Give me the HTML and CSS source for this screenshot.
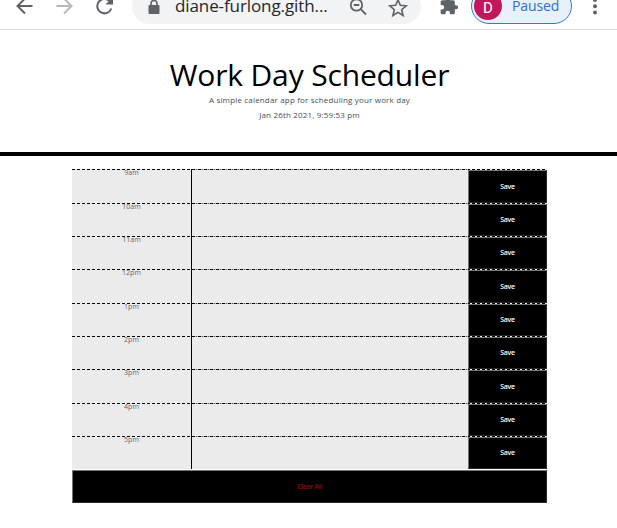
FILE: index.html
```
<!DOCTYPE html>
<html lang="en">
<head>
<meta charset="utf-8">
<title>Work Day Scheduler</title>
<link rel="stylesheet" href="styles.css">
</head>
<body>
<div class="toolbar">
  <svg class="nav-icons" width="132" height="29" viewBox="0 0 132 29" fill="none" stroke="#5f6368" stroke-width="2">
    <path d="M32.500 6H18M25-1.500L17.500 6L25 13.500"/>
    <path stroke="#bab7b7" d="M56.500 6H71M64-1.500L71.500 6L64 13.500"/>
    <path d="M110 1.500A7.200 7.200 0 1 0 111.300 8.500"/>
    <path fill="#5f6368" stroke="none" d="M113-3V4.500H105.500Z"/>
  </svg>
  <div class="address">
    <svg class="lock" width="12" height="15" viewBox="0 0 12 15"><path d="M3 6V3.500a3 3 0 0 1 6 0V6" fill="none" stroke="#5f6368" stroke-width="1.600"/><rect x=".5" y="5" width="11" height="9" rx="1" fill="#5f6368"/></svg>
    <span class="url">diane-furlong.gith...</span>
    <svg class="tools" width="64" height="24" viewBox="0 0 64 24" fill="none" stroke="#5f6368" stroke-width="1.800">
      <circle cx="7.500" cy="8" r="5.700"/><path d="M4.800 8h5.500M11.700 12.200L17 17.500"/>
      <path stroke-width="1.600" d="M49 2.800L51.300 8.300L57.200 8.800L52.700 12.700L54.100 18.500L49 15.400L43.900 18.500L45.300 12.700L40.800 8.800L46.700 8.300Z"/>
    </svg>
  </div>
  <svg class="puzzle" width="20" height="20" viewBox="0 0 24 24" fill="#5f6368"><path d="M20.500 11H19V7c0-1.100-.9-2-2-2h-4V3.500a2.500 2.500 0 0 0-5 0V5H4c-1.100 0-2 .9-2 2v3.800h1.500a2.700 2.700 0 0 1 0 5.400H2V20c0 1.100.9 2 2 2h3.800v-1.500a2.700 2.700 0 0 1 5.400 0V22H17c1.100 0 2-.9 2-2v-4h1.500a2.500 2.500 0 0 0 0-5z"/></svg>
  <div class="profile"><span class="avatar">D</span><span class="state">Paused</span></div>
  <svg class="more" width="6" height="20" viewBox="0 0 6 20" fill="#5f6368"><circle cx="3" cy="3" r="2"/><circle cx="3" cy="9.200" r="2"/><circle cx="3" cy="15.500" r="2"/></svg>
</div>
<header class="hero">
  <h1>Work Day Scheduler</h1>
  <p>A simple calendar app for scheduling your work day</p>
  <p class="clock">Jan 26th 2021, 9:59:53 pm</p>
</header>
<main class="planner">
  <div class="row"><div class="hour">9am</div><div class="task"></div><button class="save">Save</button></div>
  <div class="row"><div class="hour">10am</div><div class="task"></div><button class="save">Save</button></div>
  <div class="row"><div class="hour">11am</div><div class="task"></div><button class="save">Save</button></div>
  <div class="row"><div class="hour">12pm</div><div class="task"></div><button class="save">Save</button></div>
  <div class="row"><div class="hour">1pm</div><div class="task"></div><button class="save">Save</button></div>
  <div class="row"><div class="hour">2pm</div><div class="task"></div><button class="save">Save</button></div>
  <div class="row"><div class="hour">3pm</div><div class="task"></div><button class="save">Save</button></div>
  <div class="row"><div class="hour">4pm</div><div class="task"></div><button class="save">Save</button></div>
  <div class="row"><div class="hour">5pm</div><div class="task"></div><button class="save">Save</button></div>
</main>
<button class="clear">Clear All</button>
</body>
</html>
```
FILE: styles.css
```
* { box-sizing: border-box; }
body {
  margin: 0;
  height: 528px;
  overflow: hidden;
  background: #fff;
  font-family: "Open Sans", sans-serif;
}
.toolbar {
  display: flex;
  height: 30px;
  border-bottom: 1px solid #d9dcdc;
  overflow: hidden;
}
.nav-icons { flex: none; }
.address {
  display: flex;
  flex: none;
  width: 289px;
  height: 36px;
  margin-top: -12px;
  padding: 12px 0 0 16px;
  border-radius: 18px;
  background: #f1f3f4;
}
.lock { flex: none; margin-right: 15px; }
.url {
  flex: none;
  width: 174px;
  margin-top: -4px;
  color: #25272b;
  font: 17px/20px "Open Sans", sans-serif;
  letter-spacing: -.1px;
  white-space: nowrap;
}
.tools { flex: none; margin-top: -3px; }
.puzzle { flex: none; margin: -4px 0 0 18px; }
.profile {
  display: flex;
  flex: none;
  width: 101px;
  height: 36px;
  margin: -12px 0 0 12px;
  padding: 3px 0 0 2px;
  border: 1.500px solid #2b7cd3;
  border-radius: 18px;
  background: #e8f0fc;
}
.avatar {
  width: 28px;
  height: 28px;
  border-radius: 50%;
  background: #c2185b;
  color: #fff;
  font: 15px/32px Roboto, sans-serif;
  text-align: center;
}
.state {
  margin: 6px 0 0 10px;
  color: #2b73ca;
  font: 14px/16px "Open Sans", sans-serif;
  letter-spacing: -.1px;
}
.more { flex: none; margin: -3px 0 0 20px; }
.hero {
  height: 126px;
  padding-top: 25px;
  border-bottom: 4px solid #000;
  text-align: center;
}
.hero h1 {
  margin: 0;
  padding-left: 2px;
  font-size: 30px;
  font-weight: 400;
  line-height: 40px;
  letter-spacing: -.15px;
}
.hero p {
  margin: -1px 0 0;
  padding-left: 2px;
  color: #494d50;
  font-size: 8px;
  line-height: 11px;
  letter-spacing: .17px;
}
.hero .clock { margin-top: 4px; }
.planner {
  display: grid;
  grid-template-rows: 34px 33px 33px 34px 33px 33px 34px 33px 33px;
  width: 475px;
  margin: 13px 0 0 72px;
}
.row {
  display: grid;
  grid-template-columns: 119px 277px 79px;
  background: #ebebeb repeating-linear-gradient(90deg, #000 0 3px, #ebebeb 3px 5px) 0 0 / 100% 1px no-repeat;
}
.hour {
  color: #66696b;
  font-size: 7px;
  line-height: 7px;
  text-align: center;
}
.task {
  border-left: 1px solid #000;
  background: repeating-linear-gradient(90deg, #000 0 3px, #bbb 3px 4px, #555 4px 5px, #bbb 5px 6px) 0 0 / 100% 1px no-repeat;
}
.save, .clear {
  padding: 0;
  border: 1px solid;
  border-color: #767676 #292929 #292929 #767676;
  border-radius: 0;
  background: #000;
  font: 600 7px/10px "Open Sans", sans-serif;
}
.save {
  margin-top: 1px;
  color: #fff;
  letter-spacing: -.3px;
}
.clear {
  display: block;
  width: 475px;
  height: 33px;
  margin: 1px 0 0 72px;
  color: #9b0000;
  letter-spacing: -.3px;
}
```
